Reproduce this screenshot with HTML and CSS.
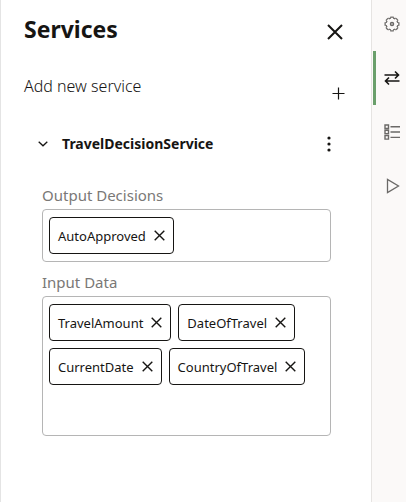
FILE: index.html
```html
<!DOCTYPE html>
<html lang="en">
<head>
<meta charset="utf-8">
<meta name="viewport" content="width=device-width, initial-scale=1">
<title>Services</title>
<link rel="stylesheet" href="styles.css">
</head>
<body>
<main class="panel">
  <header class="panel-header">
    <h1>Services</h1>
    <button class="icon-button" type="button" aria-label="Close">
      <svg width="16" height="16" viewBox="0 0 16 16"><path d="M1 1l14 14M15 1L1 15" stroke-width="2"/></svg>
    </button>
  </header>
  <div class="add-row">
    <span class="add-label" id="add-label">Add new service</span>
    <button class="icon-button add-button" type="button" aria-labelledby="add-label">
      <svg width="13" height="13" viewBox="0 0 13 13"><path d="M6.500 .5v12M.5 6.500h12" stroke-width="1.200"/></svg>
    </button>
  </div>
  <section class="service">
    <div class="service-header">
      <button class="icon-button" type="button" aria-label="Collapse" aria-expanded="true">
        <svg width="10" height="6" viewBox="0 0 10 6"><path d="M.7.8L5 4.800 9.300.8" stroke-width="1.300"/></svg>
      </button>
      <h2>TravelDecisionService</h2>
      <button class="icon-button more-button" type="button" aria-label="More actions">
        <svg width="4" height="16" viewBox="0 0 4 16"><g class="solid"><circle cx="2" cy="2" r="1.600"/><circle cx="2" cy="8" r="1.600"/><circle cx="2" cy="14" r="1.600"/></g></svg>
      </button>
    </div>
    <div class="fields">
      <h3>Output Decisions</h3>
      <ul class="tags">
        <li class="tag">AutoApproved<button class="icon-button" type="button" aria-label="Remove AutoApproved"><svg width="11" height="11" viewBox="0 0 11 11"><path d="M.7.7l9.600 9.600M10.300.7L.7 10.300" stroke-width="1.400"/></svg></button></li>
      </ul>
      <h3>Input Data</h3>
      <ul class="tags tags-tall">
        <li class="tag">TravelAmount<button class="icon-button" type="button" aria-label="Remove TravelAmount"><svg width="11" height="11" viewBox="0 0 11 11"><path d="M.7.7l9.600 9.600M10.300.7L.7 10.300" stroke-width="1.400"/></svg></button></li>
        <li class="tag">DateOfTravel<button class="icon-button" type="button" aria-label="Remove DateOfTravel"><svg width="11" height="11" viewBox="0 0 11 11"><path d="M.7.7l9.600 9.600M10.300.7L.7 10.300" stroke-width="1.400"/></svg></button></li>
        <li class="tag">CurrentDate<button class="icon-button" type="button" aria-label="Remove CurrentDate"><svg width="11" height="11" viewBox="0 0 11 11"><path d="M.7.7l9.600 9.600M10.300.7L.7 10.300" stroke-width="1.400"/></svg></button></li>
        <li class="tag">CountryOfTravel<button class="icon-button" type="button" aria-label="Remove CountryOfTravel"><svg width="11" height="11" viewBox="0 0 11 11"><path d="M.7.7l9.600 9.600M10.300.7L.7 10.300" stroke-width="1.400"/></svg></button></li>
      </ul>
    </div>
  </section>
</main>
<nav class="rail" aria-label="Tools">
  <button class="rail-button" type="button" aria-label="Settings">
    <svg width="16" height="16" viewBox="0 0 16 16"><circle cx="8" cy="8" r="6.900" stroke-width="1.300" pathLength="80" stroke-dasharray="7 3" stroke-dashoffset="3.500"/><circle cx="8" cy="8" r="5.900" stroke-width="1.300" pathLength="80" stroke-dasharray="5 5" stroke-dashoffset="-2.500"/><circle cx="8" cy="8" r="1.500" stroke-width="1.500"/></svg>
  </button>
  <button class="rail-button active" type="button" aria-label="Services" aria-current="page">
    <svg width="16" height="16" viewBox="0 0 16 16"><path d="M.5 5h14M11 1.500L14.500 5 11 8.500M15.500 11h-14M5 7.500L1.500 11 5 14.500" stroke-width="1.600"/></svg>
  </button>
  <button class="rail-button" type="button" aria-label="List">
    <svg width="16" height="16" viewBox="0 0 16 16"><path d="M1 1h3.500v3.500H1zM1 6.300h3.500v3.500H1zM1 11.600h3.500v3.500H1zM6.500 2.700H16M6.500 8H16M6.500 13.400H16" stroke-width="1.400"/></svg>
  </button>
  <button class="rail-button" type="button" aria-label="Run">
    <svg width="16" height="16" viewBox="0 0 16 16"><path d="M3.500 1.500v13L14.500 8z" stroke-width="1.300"/></svg>
  </button>
</nav>
</body>
</html>
```
FILE: styles.css
```css
* {
  box-sizing: border-box;
}

body {
  margin: 0;
  min-height: 100vh;
  display: flex;
  background: #fff;
  color: #161513;
  font-family: "Noto Sans", sans-serif;
  font-size: 13px;
}

h1, h2, h3, ul {
  margin: 0;
  padding: 0;
}

button {
  padding: 0;
  border: 0;
  background: none;
  color: inherit;
  font: inherit;
  cursor: pointer;
}

svg {
  display: block;
  fill: none;
  stroke: currentColor;
}

.solid {
  fill: currentColor;
  stroke: none;
}

.panel {
  flex: 1;
  min-width: 0;
  padding: 12px 24px 24px 23px;
  border-left: 1px solid #e4e4e4;
}

.icon-button {
  flex: none;
  display: flex;
  align-items: center;
  justify-content: center;
}

.panel-header {
  display: flex;
  align-items: center;
  justify-content: space-between;
  height: 40px;
  padding-right: 4px;
}

h1 {
  font-size: 23px;
  line-height: 32px;
  padding-bottom: 6px;
}

.add-row {
  display: flex;
  justify-content: space-between;
  align-items: flex-start;
  margin-top: 22px;
  padding-right: 2px;
}

.add-label {
  font-size: 16px;
  font-weight: 300;
  line-height: 24px;
}

.add-button {
  padding-top: 13px;
}

.service-header {
  display: flex;
  align-items: center;
  height: 32px;
  margin-top: 28px;
  padding: 0 16px 0 14px;
}

h2 {
  flex: 1;
  margin-left: 14px;
  font-size: 14px;
  line-height: 24px;
}

.fields {
  margin-top: 23px;
  padding: 0 16px 0 18px;
}

h3 {
  color: #7a7876;
  font-size: 15px;
  font-weight: 400;
  line-height: 24px;
  padding-bottom: 2px;
}

.tags {
  display: flex;
  flex-wrap: wrap;
  align-content: flex-start;
  gap: 7px;
  padding: 7px 6px;
  margin-bottom: 8px;
  border: 1px solid #b5b5b5;
  border-radius: 4px;
  list-style: none;
}

.tags-tall {
  min-height: 140px;
}

.tag {
  display: flex;
  align-items: center;
  gap: 8px;
  height: 37px;
  padding: 0 8px;
  border: 1px solid #161513;
  border-radius: 4px;
}

.rail {
  flex: none;
  width: 35px;
  display: flex;
  flex-direction: column;
  gap: 6px;
  background: #fbf9f8;
  border-left: 1px solid #e6e4e2;
  color: #6b6967;
}

.rail-button {
  position: relative;
  height: 48px;
  padding-left: 12px;
}

.active {
  color: #161513;
}

.active::before {
  content: "";
  position: absolute;
  top: -3px;
  bottom: -3px;
  left: 1px;
  width: 3px;
  background: #6a9f6b;
}
```
